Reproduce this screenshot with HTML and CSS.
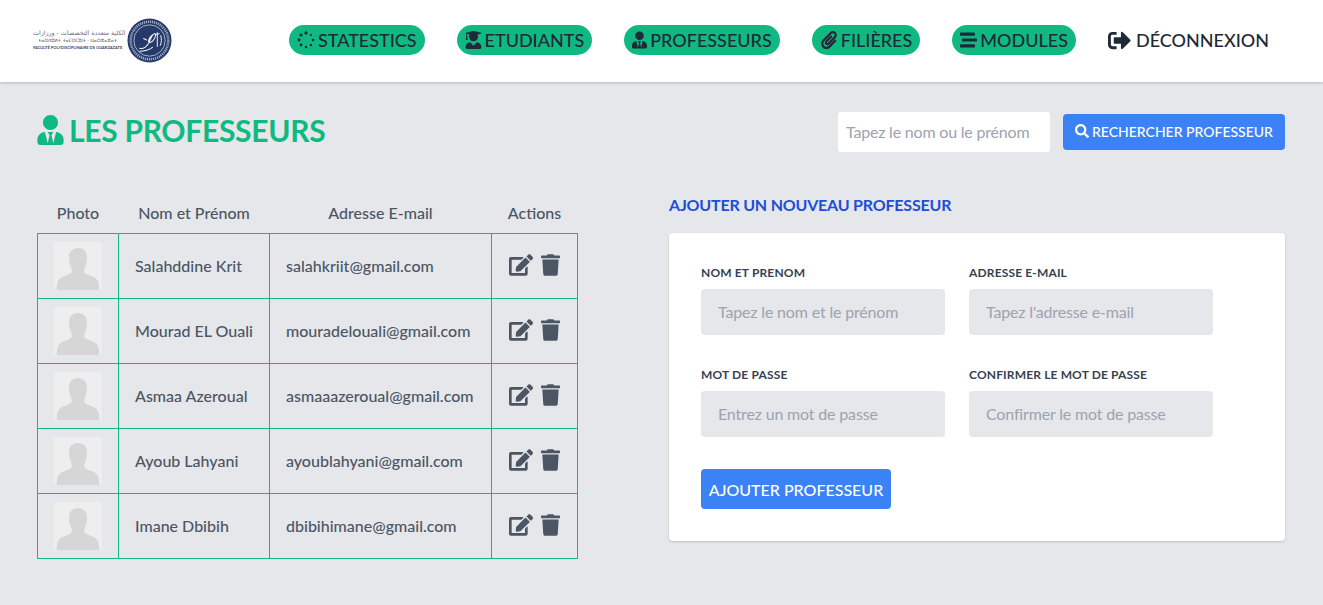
FILE: index.html
```html
<!DOCTYPE html>
<html lang="fr">
<head>
<meta charset="utf-8">
<title>Les professeurs</title>
<link rel="stylesheet" href="styles.css">
</head>
<body>
<svg class="sprite" aria-hidden="true">
  <symbol id="i-tie" viewBox="0 0 448 512"><path d="M224 256c70.7 0 128-57.3 128-128S294.7 0 224 0 96 57.3 96 128s57.3 128 128 128zm95.8 32.6L272 480l-32-136 32-56h-96l32 56-32 136-47.8-191.4C56.9 292 0 350.3 0 422.4V464c0 26.5 21.5 48 48 48h352c26.5 0 48-21.5 48-48v-41.6c0-72.1-56.9-130.4-128.2-133.8z"/></symbol>
  <symbol id="i-grad" viewBox="0 0 448 512"><path d="M319.4 320.6L224 416l-95.4-95.4C57.1 323.7 0 382.2 0 454.4v9.6c0 26.5 21.5 48 48 48h352c26.5 0 48-21.5 48-48v-9.6c0-72.2-57.1-130.7-128.6-133.8zM13.6 79.8l6.4 1.5v58.4c-7 4.2-12 11.5-12 20.3 0 8.4 4.6 15.4 11.1 19.7L3.5 242c-1.7 6.9 2.1 14 7.6 14h41.8c5.5 0 9.3-7.1 7.6-14l-15.6-62.3C51.4 175.4 56 168.4 56 160c0-8.8-5-16.1-12-20.3V87.1l66 15.9c-8.6 17.2-14 36.4-14 57 0 70.7 57.3 128 128 128s128-57.3 128-128c0-20.6-5.3-39.8-14-57l96.3-23.2c18.2-4.4 18.2-27.1 0-31.5l-190.4-46c-13-3.1-26.7-3.1-39.7 0L13.6 48.2c-18.1 4.4-18.1 27.2 0 31.6z"/></symbol>
  <symbol id="i-clip" viewBox="0 0 448 512"><path d="M43.246 466.142c-58.43-60.289-57.341-157.511 1.386-217.581L254.392 34c44.316-45.332 116.351-45.336 160.671 0 43.89 44.894 43.943 117.329 0 162.276L232.214 383.128c-29.855 30.537-78.633 30.111-107.982-.998-28.275-29.97-27.368-77.473 1.452-106.953l143.743-146.835c6.182-6.314 16.312-6.422 22.626-.241l22.861 22.379c6.315 6.182 6.422 16.312.241 22.626L171.427 319.927c-4.932 5.045-5.236 13.428-.648 18.292 4.372 4.634 11.245 4.711 15.688.165l182.849-186.851c19.613-20.062 19.613-52.725-.011-72.798-19.189-19.627-49.957-19.637-69.154 0L90.39 293.295c-34.763 35.56-35.299 93.12-1.191 128.313 34.01 35.093 88.985 35.137 123.058.286l172.06-175.999c6.177-6.319 16.307-6.433 22.626-.256l22.877 22.364c6.319 6.177 6.434 16.307.256 22.626l-172.06 175.998c-59.576 60.938-155.943 60.216-214.77-.485z"/></symbol>
  <symbol id="i-stream" viewBox="0 0 512 512"><path d="M16 128h416c8.84 0 16-7.16 16-16V48c0-8.84-7.16-16-16-16H16C7.16 32 0 39.16 0 48v64c0 8.84 7.16 16 16 16zm480 80H80c-8.84 0-16 7.16-16 16v64c0 8.84 7.16 16 16 16h416c8.84 0 16-7.16 16-16v-64c0-8.84-7.16-16-16-16zm-64 176H16c-8.84 0-16 7.16-16 16v64c0 8.84 7.16 16 16 16h416c8.84 0 16-7.16 16-16v-64c0-8.84-7.16-16-16-16z"/></symbol>
  <symbol id="i-spin" viewBox="0 0 512 512"><circle cx="256" cy="56" r="46"/><circle cx="256" cy="456" r="36"/><circle cx="456" cy="256" r="36"/><circle cx="56" cy="256" r="42"/><circle cx="397" cy="115" r="30"/><circle cx="397" cy="397" r="34"/><circle cx="115" cy="397" r="38"/><circle cx="115" cy="115" r="44"/></symbol>
  <symbol id="i-out" viewBox="0 0 512 512"><path d="M497 273L329 441c-15 15-41 4.5-41-17v-96H152c-13.3 0-24-10.7-24-24v-96c0-13.3 10.7-24 24-24h136V88c0-21.4 25.9-32 41-17l168 168c9.3 9.4 9.3 24.6 0 34zM192 436v-40c0-6.6-5.4-12-12-12H96c-17.7 0-32-14.3-32-32V160c0-17.7 14.3-32 32-32h84c6.6 0 12-5.4 12-12V76c0-6.6-5.4-12-12-12H96c-53 0-96 43-96 96v192c0 53 43 96 96 96h84c6.6 0 12-5.4 12-12z"/></symbol>
  <symbol id="i-search" viewBox="0 0 512 512"><path d="M505 442.7L405.3 343c-4.5-4.5-10.6-7-17-7H372c27.6-35.3 44-79.7 44-128C416 93.1 322.9 0 208 0S0 93.1 0 208s93.1 208 208 208c48.3 0 92.7-16.4 128-44v16.3c0 6.4 2.5 12.5 7 17l99.7 99.7c9.4 9.4 24.6 9.4 33.9 0l28.3-28.3c9.4-9.4 9.4-24.6.1-34zM208 336c-70.7 0-128-57.2-128-128 0-70.7 57.2-128 128-128 70.7 0 128 57.2 128 128 0 70.7-57.2 128-128 128z"/></symbol>
  <symbol id="i-edit" viewBox="0 0 576 512"><path d="M402.6 83.2l90.2 90.2c3.8 3.8 3.8 10 0 13.8L274.4 405.6l-92.8 10.3c-12.4 1.4-22.9-9.1-21.5-21.5l10.3-92.8L388.8 83.2c3.8-3.8 10-3.8 13.8 0zm162-22.9l-48.8-48.8c-15.2-15.2-39.9-15.2-55.2 0l-35.4 35.4c-3.8 3.8-3.8 10 0 13.8l90.2 90.2c3.8 3.8 10 3.8 13.8 0l35.4-35.4c15.2-15.3 15.2-40 0-55.2zM384 346.2V448H64V128h229.8c3.2 0 6.2-1.3 8.5-3.5l40-40c7.6-7.6 2.2-20.5-8.5-20.5H48C21.5 64 0 85.5 0 112v352c0 26.5 21.5 48 48 48h352c26.5 0 48-21.5 48-48V306.2c0-10.7-12.9-16-20.5-8.5l-40 40c-2.2 2.3-3.5 5.3-3.5 8.5z"/></symbol>
  <symbol id="i-trash" viewBox="0 0 448 512"><path d="M432 32H312l-9.4-18.7A24 24 0 0 0 281.1 0H166.8a23.72 23.72 0 0 0-21.4 13.3L136 32H16A16 16 0 0 0 0 48v32a16 16 0 0 0 16 16h416a16 16 0 0 0 16-16V48a16 16 0 0 0-16-16zM53.2 467a48 48 0 0 0 47.9 45h245.8a48 48 0 0 0 47.9-45L416 128H32z"/></symbol>
  <symbol id="i-avatar" viewBox="0 0 48 48"><rect width="48" height="48" rx="3" fill="#eeeeee"/><path fill="#d6d6d6" d="M24 6c-5.500 0-9 3.600-9 9 0 4 .8 8 2.300 11 .8 1.600.7 4-.3 5-1.800 2-9 3-11.500 6C3.500 39 2.700 43 2.700 48h42.600c0-5-.8-9-2.800-11-2.500-3-9.700-4-11.500-6-1-1-1.100-3.400-.3-5 1.500-3 2.300-7 2.300-11 0-5.400-3.500-9-9-9z"/></symbol>
</svg>

<header class="topbar">
  <div class="logo">
    <div class="logo-text">
      <span class="logo-ar">الكلية متعددة التخصصات - ورزازات</span>
      <span class="logo-tf">ⵜⴰⵙⴷⵓⵍⵜ ⵜⴰⵎⵙⵎⵓⵏⵜ - ⵡⴰⵔⵣⴰⵣⴰⵜ</span>
      <span class="logo-fr">FACULTÉ POLYDISCIPLINAIRE DE OUARZAZATE</span>
    </div>
    <svg class="seal" viewBox="0 0 46 46" aria-hidden="true">
      <circle cx="23" cy="23" r="22.500" fill="#25396b"/>
      <circle cx="23" cy="23" r="16" fill="none" stroke="#e6e9f2" stroke-width=".7"/>
      <circle cx="23" cy="23" r="19.200" fill="none" stroke="#a3adc6" stroke-width="2.600" stroke-dasharray="1.200 .9"/>
      <path d="M13 31c4 1 7-2 9-5 2-4 3-9 6-10 2-.5 1.500 3-.5 6-2 3-5 4-5.500 2-.5-2 2.500-6 4.500-7M17 21l3 1.500M13 34c4 0 9-1 13-4" fill="none" stroke="#f4f5f9" stroke-width="1.100" stroke-linecap="round"/>
      <path d="M31 15v14M34.500 18c1 3 1 7-.5 10M29 17l4-1" fill="none" stroke="#f4f5f9" stroke-width="1" stroke-linecap="round"/>
    </svg>
  </div>
  <nav class="nav">
    <a class="nav-link pill"><svg class="ico ico-spin"><use href="#i-spin"/></svg>STATESTICS</a>
    <a class="nav-link pill"><svg class="ico ico-grad"><use href="#i-grad"/></svg>ETUDIANTS</a>
    <a class="nav-link pill"><svg class="ico ico-tie"><use href="#i-tie"/></svg>PROFESSEURS</a>
    <a class="nav-link pill"><svg class="ico ico-clip"><use href="#i-clip"/></svg>FILIÈRES</a>
    <a class="nav-link pill"><svg class="ico ico-wide"><use href="#i-stream"/></svg>MODULES</a>
    <a class="nav-link nav-out"><svg class="ico ico-out"><use href="#i-out"/></svg>DÉCONNEXION</a>
  </nav>
</header>

<main class="page">
  <section class="head">
    <h1 class="title"><svg class="title-ico"><use href="#i-tie"/></svg>LES PROFESSEURS</h1>
    <form class="search">
      <input class="search-input" type="text" placeholder="Tapez le nom ou le prénom">
      <button class="btn btn-search" type="button"><svg class="search-ico"><use href="#i-search"/></svg>RECHERCHER PROFESSEUR</button>
    </form>
  </section>

  <section class="content">
    <table class="table">
      <colgroup><col class="c1"><col class="c2"><col class="c3"><col class="c4"></colgroup>
      <thead>
        <tr><th>Photo</th><th>Nom et Prénom</th><th>Adresse E-mail</th><th>Actions</th></tr>
      </thead>
      <tbody>
        <tr><td class="td-photo"><svg class="avatar"><use href="#i-avatar"/></svg></td><td>Salahddine Krit</td><td>salahkriit@gmail.com</td><td class="td-act"><div class="acts"><svg class="a-edit"><use href="#i-edit"/></svg><svg class="a-trash"><use href="#i-trash"/></svg></div></td></tr>
        <tr><td class="td-photo"><svg class="avatar"><use href="#i-avatar"/></svg></td><td>Mourad EL Ouali</td><td>mouradelouali@gmail.com</td><td class="td-act"><div class="acts"><svg class="a-edit"><use href="#i-edit"/></svg><svg class="a-trash"><use href="#i-trash"/></svg></div></td></tr>
        <tr><td class="td-photo"><svg class="avatar"><use href="#i-avatar"/></svg></td><td>Asmaa Azeroual</td><td>asmaaazeroual@gmail.com</td><td class="td-act"><div class="acts"><svg class="a-edit"><use href="#i-edit"/></svg><svg class="a-trash"><use href="#i-trash"/></svg></div></td></tr>
        <tr><td class="td-photo"><svg class="avatar"><use href="#i-avatar"/></svg></td><td>Ayoub Lahyani</td><td>ayoublahyani@gmail.com</td><td class="td-act"><div class="acts"><svg class="a-edit"><use href="#i-edit"/></svg><svg class="a-trash"><use href="#i-trash"/></svg></div></td></tr>
        <tr><td class="td-photo"><svg class="avatar"><use href="#i-avatar"/></svg></td><td>Imane Dbibih</td><td>dbibihimane@gmail.com</td><td class="td-act"><div class="acts"><svg class="a-edit"><use href="#i-edit"/></svg><svg class="a-trash"><use href="#i-trash"/></svg></div></td></tr>
      </tbody>
    </table>

    <div class="add">
      <h2 class="add-title">AJOUTER UN NOUVEAU PROFESSEUR</h2>
      <form class="card">
        <div class="fields">
          <label class="field"><span class="field-label">NOM ET PRENOM</span><input class="field-input" type="text" placeholder="Tapez le nom et le prénom"></label>
          <label class="field"><span class="field-label">ADRESSE E-MAIL</span><input class="field-input" type="text" placeholder="Tapez l'adresse e-mail"></label>
          <label class="field"><span class="field-label">MOT DE PASSE</span><input class="field-input" type="text" placeholder="Entrez un mot de passe"></label>
          <label class="field"><span class="field-label">CONFIRMER LE MOT DE PASSE</span><input class="field-input" type="text" placeholder="Confirmer le mot de passe"></label>
        </div>
        <button class="btn btn-add" type="button">AJOUTER PROFESSEUR</button>
      </form>
    </div>
  </section>
</main>
</body>
</html>
```
FILE: styles.css
```css
* { box-sizing: border-box; }
html, body { margin: 0; padding: 0; }
body {
  font-family: "Lato", "Liberation Sans", sans-serif;
  background: #e5e7eb;
  color: #1f2937;
  height: 605px;
  overflow: hidden;
}
.sprite { display: none; }

.topbar {
  height: 82px;
  background: #fff;
  box-shadow: 0 1px 3px rgba(0,0,0,.15), 0 1px 2px rgba(0,0,0,.08);
  display: flex;
  align-items: center;
  padding: 0 54px 2px 33px;
}
.logo { display: flex; align-items: center; gap: 5px; }
.logo-text {
  width: 89px;
  display: flex;
  flex-direction: column;
  align-items: stretch;
  gap: 3px;
  line-height: 1;
  white-space: nowrap;
}
.logo-ar { font-family: "DejaVu Sans", sans-serif; font-size: 6.300px; text-align: center; color: #6a6d85; }
.logo-tf { font-family: "DejaVu Sans", sans-serif; font-size: 4.500px; text-align: center; color: #3f4565; }
.logo-fr { font-size: 4px; font-weight: 700; color: #3a4468; }
.seal { width: 45px; height: 45px; }

.nav { margin-left: auto; display: flex; align-items: center; gap: 32px; }
.nav-link {
  display: flex;
  align-items: center;
  gap: 3px;
  height: 30px;
  font-size: 18px;
  font-weight: 500;
  color: #1f2937;
  white-space: nowrap;
}
.pill { background: #10b981; border-radius: 15px; padding: 0 8px; }
.ico { width: 16px; height: 18px; fill: #1f2937; }
.ico-spin { width: 18px; }
.ico-grad { width: 17px; }
.ico-tie { width: 15px; }
.ico-clip { width: 18px; }
.ico-wide { width: 17px; }
.ico-out { width: 23px; height: 23px; }
.nav-out { gap: 5px; }

.page { padding: 30px 38px 0 37px; }
.head { display: flex; justify-content: space-between; align-items: center; height: 40px; }
.title {
  margin: 0 0 4px;
  font-size: 30px;
  font-weight: 700;
  line-height: 36px;
  letter-spacing: -.3px;
  color: #10b981;
  display: flex;
  align-items: center;
  gap: 5px;
}
.title-ico { width: 27px; height: 30px; fill: #10b981; }
.search { display: flex; align-items: center; gap: 13px; }
.search-input {
  width: 212px;
  height: 40px;
  border: 0;
  border-radius: 3px;
  background: #fff;
  padding: 0 8px 2px;
  font: 400 16px "Lato", sans-serif;
  letter-spacing: -.2px;
  color: #1f2937;
}
.search-input::placeholder, .field-input::placeholder { color: #9ca3af; opacity: 1; }
.btn {
  border: 0;
  border-radius: 4px;
  background: #3b82f6;
  color: #fff;
  font-family: "Lato", sans-serif;
  display: flex;
  align-items: center;
  justify-content: center;
}
.btn-search { width: 222px; height: 36px; font-size: 14px; font-weight: 500; gap: 3px; padding: 0 0 2px; }
.search-ico { width: 14px; height: 14px; fill: #fff; }

.content { display: flex; justify-content: space-between; align-items: flex-start; margin-top: 41px; }
.table { border-collapse: collapse; table-layout: fixed; width: 540px; color: #4b5563; font-size: 16px; font-weight: 500; }
.c1 { width: 81px; }
.c2 { width: 151px; }
.c3 { width: 222px; }
.c4 { width: 86px; }
.table th { height: 40px; padding: 0; font-weight: 500; text-align: center; }
.table td { height: 65px; padding: 0 16px; border: 1px solid #10b981; white-space: nowrap; }
.avatar { display: block; width: 48px; height: 48px; }
.table .td-act { padding: 0; }
.acts { display: flex; justify-content: center; align-items: center; gap: 8px; padding-bottom: 2px; }
.a-edit { width: 24px; height: 22px; fill: #4b5563; }
.a-trash { width: 19px; height: 22px; fill: #4b5563; }

.add { width: 616px; }
.add-title {
  margin: 0 0 17px;
  padding-top: 1px;
  font-size: 16px;
  line-height: 22px;
  font-weight: 700;
  letter-spacing: -.2px;
  color: #1d4ed8;
}
.card {
  height: 308px;
  background: #fff;
  border-radius: 4px;
  box-shadow: 0 1px 3px rgba(0,0,0,.12), 0 1px 2px rgba(0,0,0,.06);
  padding: 32px;
}
.fields { display: grid; grid-template-columns: 244px 244px; column-gap: 24px; row-gap: 32px; }
.field { display: flex; flex-direction: column; gap: 8px; }
.field-label { font-size: 12px; line-height: 16px; font-weight: 700; letter-spacing: .15px; color: #374151; height: 16px; }
.field-input {
  height: 46px;
  border: 0;
  border-radius: 4px;
  background: #e5e7eb;
  padding: 0 17px 2px;
  font: 400 16px "Lato", sans-serif;
  letter-spacing: -.17px;
}
.btn-add { margin-top: 32px; width: 190px; height: 40px; font-size: 16px; font-weight: 500; }
```
